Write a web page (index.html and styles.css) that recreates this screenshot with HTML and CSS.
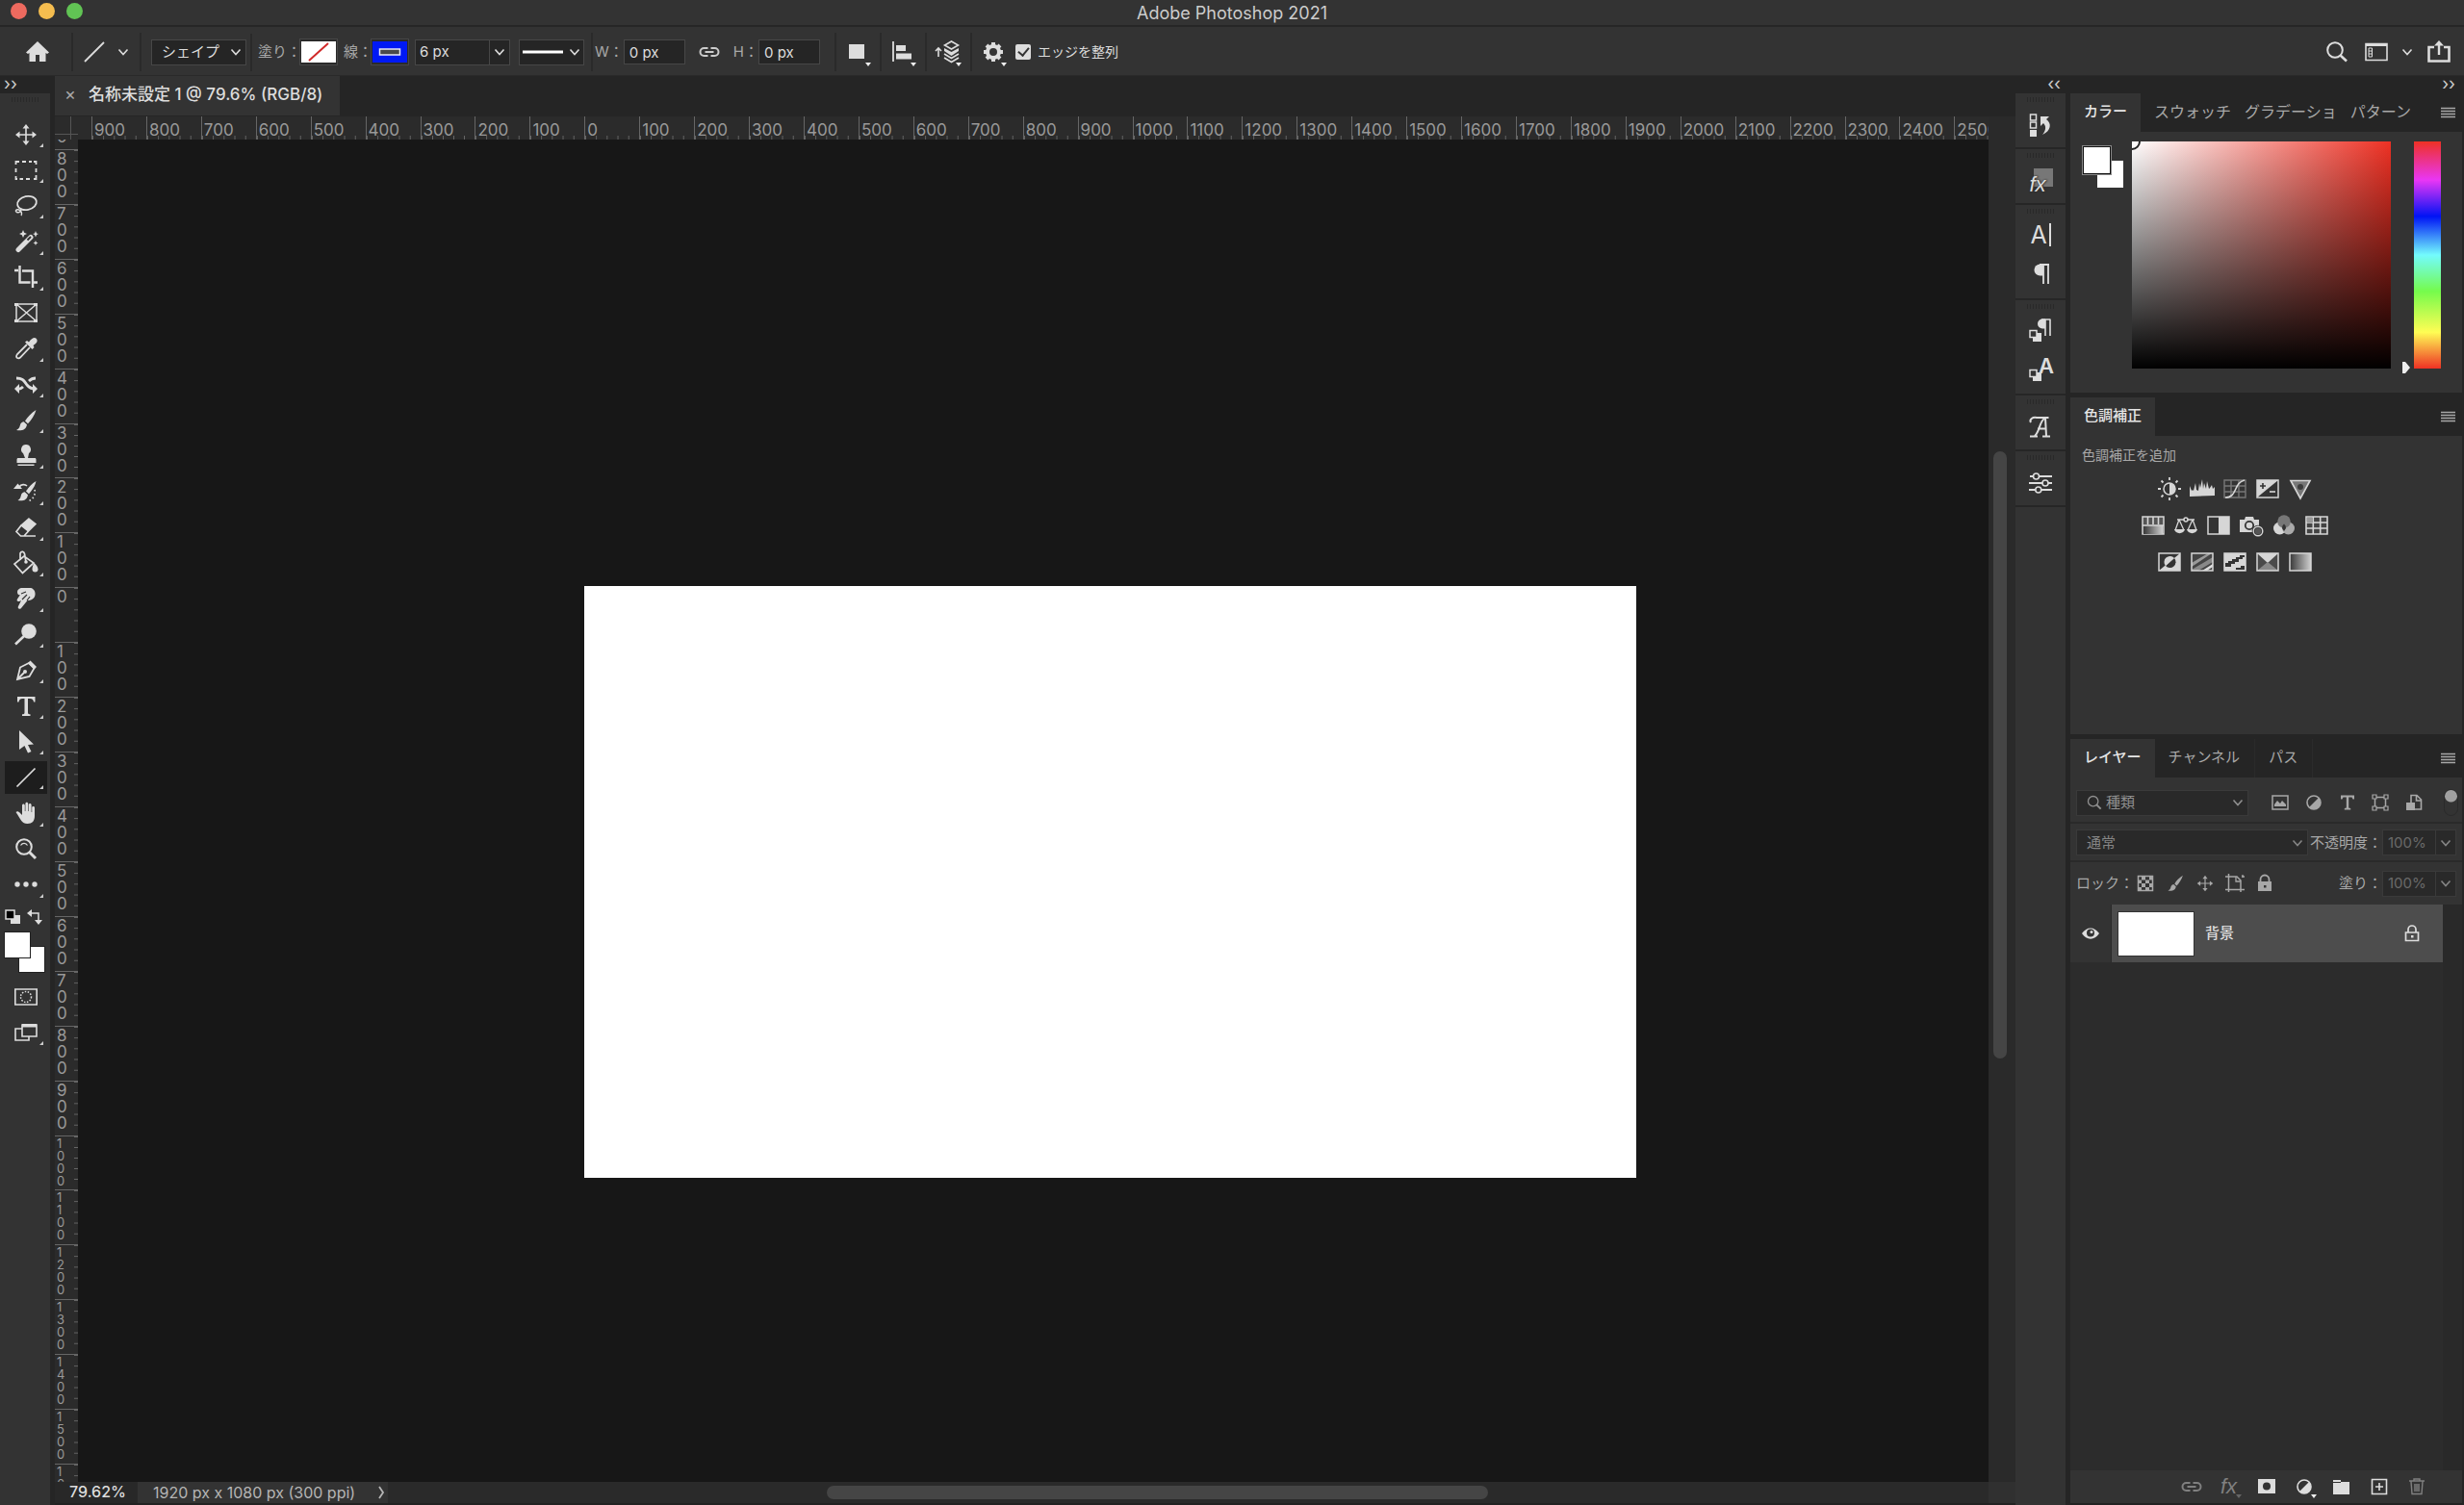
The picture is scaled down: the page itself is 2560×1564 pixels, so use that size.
FILE: index.html
```html
<!DOCTYPE html>
<html lang="ja">
<head>
<meta charset="utf-8">
<title>Adobe Photoshop 2021</title>
<link rel="stylesheet" href="styles.css">
</head>
<body>
<svg class="defs" aria-hidden="true">
  <defs>
    <symbol id="chevron" viewBox="0 0 12 12"><path d="M1.500 3.500l4.500 5 4.500-5" fill="none" stroke="currentColor" stroke-width="1.600"/></symbol>
    <symbol id="menu" viewBox="0 0 16 12"><path d="M0 1.500h15M0 4.500h15M0 7.500h15M0 10.500h15" stroke="currentColor" stroke-width="1.300"/></symbol>
    <symbol id="link" viewBox="0 0 24 24"><path d="M10.500 8H6.500a4 4 0 0 0 0 8h4M13.500 8h4a4 4 0 0 1 0 8h-4M7.500 12h9" fill="none" stroke="currentColor" stroke-width="2"/></symbol>
    <symbol id="half" viewBox="0 0 24 24"><circle cx="12" cy="12" r="7" fill="none" stroke="currentColor" stroke-width="1.600"/><path d="M17 7A7 7 0 0 1 7 17z" fill="currentColor"/></symbol>
    <symbol id="move" viewBox="0 0 24 24"><path d="M12 3v18M3 12h18" stroke="currentColor" stroke-width="1.600"/><path d="M12 1l3.500 4.500h-7zM12 23l3.500-4.500h-7zM1 12l4.500-3.500v7zM23 12l-4.500-3.500v7z" fill="currentColor"/></symbol>
    <symbol id="brush" viewBox="0 0 24 24"><path d="M22.500 1c-5 3-9 7.500-11.500 11.500l3 2.700C17.500 11.500 21 6.500 22.500 1zM9.700 13.200c-3.200.3-3.500 3-4.200 5-.6 1.800-2 3-3.500 3.800 5 .8 10 .2 11-5.800z" fill="currentColor"/></symbol>
    <symbol id="magnifier" viewBox="0 0 24 24"><circle cx="10" cy="10" r="7.800" fill="none" stroke="currentColor" stroke-width="2"/><path d="M15.500 15.500l6.500 6.500" stroke="currentColor" stroke-width="3"/></symbol>
    <symbol id="pilcrow" viewBox="0 0 24 24"><path d="M20 2v20M15 2v20M11 2h10" stroke="currentColor" stroke-width="1.800" fill="none"/><path d="M15 1.500v12h-3.500a6 6 0 0 1 0-12z" fill="currentColor"/></symbol>
    <linearGradient id="fade"><stop offset="0" stop-color="#383838"/><stop offset="1" stop-color="#d0d0d0"/></linearGradient>
  </defs>
</svg>

<div class="app">
  <header class="titlebar">
    <div class="lights"><button class="light red" aria-label="閉じる"></button><button class="light yellow" aria-label="しまう"></button><button class="light green" aria-label="拡大"></button></div>
    <h1 class="app-name">Adobe Photoshop 2021</h1>
  </header>

  <div class="options">
    <button class="home" aria-label="ホーム"><svg class="icon" viewBox="0 0 24 24"><path d="M12 1L0 12.500l2 1.500 1.500-1V22H10v-7h4v7h6.500v-9l1.500 1 2-1.500z" fill="currentColor"/></svg></button>
    <button class="current-tool" aria-label="ラインツール"><svg class="icon" viewBox="0 0 24 24"><path d="M2 22L22 2" stroke="currentColor" stroke-width="1.800"/></svg><svg class="chev"><use href="#chevron"/></svg></button>
    <div class="mode-group"><label class="select mode"><select aria-label="ツールモード"><option>シェイプ</option></select><svg class="chev"><use href="#chevron"/></svg></label></div>
    <div class="group">
      <span class="lbl">塗り：</span>
      <button class="swatch none" aria-label="塗り"><svg viewBox="0 0 36 22"><path d="M0 0h36v22H0z" fill="#fff"/><path d="M8 20L28 2" stroke="#d02a2a" stroke-width="2"/></svg></button>
      <span class="lbl">線：</span>
      <button class="swatch" aria-label="線"><svg viewBox="0 0 36 22"><path d="M0 0h36v22H0z" fill="#0019f5"/><path d="M7.500 8h21v6h-21z" fill="#4a4a4a" stroke="#e8e8f5" stroke-width="1.500"/></svg></button>
      <div class="combo stroke-width"><input value="6 px" aria-label="線の幅"><button aria-label="線の幅の一覧"><svg class="chev"><use href="#chevron"/></svg></button></div>
      <button class="line-type" aria-label="線の種類"><svg class="stroke-sample" viewBox="0 0 42 4"><path d="M0 2h42" stroke="#fff" stroke-width="3"/></svg><svg class="chev"><use href="#chevron"/></svg></button>
    </div>
    <div class="group size">
      <label class="lbl" for="w">W：</label><input class="field" id="w" value="0 px">
      <button class="chain" aria-label="縦横比を固定"><svg class="icon"><use href="#link"/></svg></button>
      <label class="lbl" for="h">H：</label><input class="field" id="h" value="0 px">
    </div>
    <button class="opt path" aria-label="パスの操作"><svg class="icon" viewBox="0 0 24 24"><path d="M3 4h16v15H3z" fill="currentColor"/></svg></button>
    <button class="opt" aria-label="パスの整列"><svg class="icon" viewBox="0 0 24 24"><path d="M2 1v21" stroke="currentColor" stroke-width="1.800"/><path d="M5 5h10v6H5zM5 13.500h16v6H5z" fill="currentColor"/></svg></button>
    <button class="opt" aria-label="パスの配置"><svg class="icon" viewBox="0 0 24 24"><path d="M2 17V8M-1 11l3-3 3 3" fill="none" stroke="currentColor" stroke-width="1.600"/><path d="M15.500 1l7 4-7 4-7-4z" fill="none" stroke="currentColor" stroke-width="1.600"/><path d="M8 8l7.500 4L23 8v3l-7.500 5L8 11z" fill="currentColor"/><path d="M8 14l7.500 4.500L23 14M8 18l7.500 4.500L23 18" fill="none" stroke="currentColor" stroke-width="1.600"/></svg></button>
    <button class="opt gear" aria-label="その他のオプション"><svg class="icon" viewBox="0 0 24 24"><circle cx="12" cy="12" r="6" fill="none" stroke="currentColor" stroke-width="4"/><path d="M12 2v3M12 19v3M2 12h3M19 12h3M5 5l2 2M17 17l2 2M5 19l2-2M17 7l2-2" stroke="currentColor" stroke-width="4"/></svg></button>
    <label class="check"><input type="checkbox" checked>エッジを整列</label>
    <div class="right-tools">
      <button aria-label="検索"><svg class="icon" viewBox="0 0 24 24"><circle cx="10" cy="10" r="7.800" fill="none" stroke="currentColor" stroke-width="2"/><path d="M15.500 15.500l6.500 6" stroke="currentColor" stroke-width="2.600"/></svg></button>
      <button class="workspace" aria-label="ワークスペース"><svg class="icon" viewBox="0 0 24 24"><path d="M1 3.500h22v17H1z" fill="none" stroke="currentColor" stroke-width="1.600"/><path d="M1 3h22v3H1z" fill="currentColor"/><path d="M4 8h3.500v9H4zM4 11h3.500M4 14h3.500" fill="none" stroke="currentColor"/></svg><svg class="chev"><use href="#chevron"/></svg></button>
      <button aria-label="共有"><svg class="icon" viewBox="0 0 24 24"><path d="M7 7H1.500v14.500h21V7H17" fill="none" stroke="currentColor" stroke-width="2.600"/><path d="M12 3v12" stroke="currentColor" stroke-width="2.400"/><path d="M12 0l5 5.500H7z" fill="currentColor"/></svg></button>
    </div>
  </div>

  <main class="workarea">
    <aside class="toolbar">
      <div class="strip left">››</div>
      <div class="grip wide"></div>
      <nav class="tools">
        <button class="tool" aria-label="移動"><svg class="icon"><use href="#move"/></svg></button>
        <button class="tool" aria-label="長方形選択"><svg class="icon" viewBox="0 0 24 24"><path d="M1.500 6V3H5M8 3h4M15 3h3M20 3h2.500v3M22.500 10v4M22.500 17v4H20M16 21h-4M9 21H5.500M3 21H1.500v-3M1.500 14v-4" fill="none" stroke="currentColor" stroke-width="1.800"/></svg></button>
        <button class="tool" aria-label="なげなわ"><svg class="icon" viewBox="0 0 24 24"><ellipse cx="13" cy="9" rx="10" ry="7" transform="rotate(-12 13 9)" fill="none" stroke="currentColor" stroke-width="1.800"/><path d="M7 22c1.500-2 0-5-2.500-6-3-.8-4 1.500-2 2.500 2.500 1 5-1 4.500-4" fill="none" stroke="currentColor" stroke-width="1.500"/></svg></button>
        <button class="tool" aria-label="自動選択"><svg class="icon" viewBox="0 0 24 24"><path d="M4 20.500L17 7.500" stroke="currentColor" stroke-width="5" stroke-linecap="round"/><path d="M13.500 10.500l3.500-3.500" stroke="#333" stroke-width="2"/><path d="M9 0l1.200 2.800L13 4l-2.800 1.200L9 8 7.800 5.200 5 4l2.800-1.200zM22 1l1 2.500 2 .5-2 1-1 2.500-1-2.500-2-1 2-.5zM22 11l.8 1.700 1.700.8-1.700.8L22 16l-.8-1.700-1.700-.8 1.700-.8z" fill="currentColor"/></svg></button>
        <button class="tool" aria-label="切り抜き"><svg class="icon" viewBox="0 0 24 24"><path d="M5.500 0v17.500h11M18 17.500h6M0 5h4M8 5.500h11V23" fill="none" stroke="currentColor" stroke-width="2.400"/></svg></button>
        <button class="tool plain" aria-label="フレーム"><svg class="icon" viewBox="0 0 24 24"><path d="M2 3h21v18H2zM2 3l21 18M23 3L2 21" fill="none" stroke="currentColor" stroke-width="1.500"/><path d="M0 2h4v3H0zM20 2h4v3h-4zM0 19h4v3H0zM20 19h4v3h-4z" fill="currentColor"/></svg></button>
        <button class="tool" aria-label="スポイト"><svg class="icon" viewBox="0 0 24 24"><path d="M13 8L3 18c-1.500 2-1 3.500 0 4s2 .5 3-.5L16 11" fill="none" stroke="currentColor" stroke-width="1.800"/><path d="M11 5.500l2-1.500 2 1.500C17 2.500 19 1 21 1c2 .5 3 2 2.500 4-.5 1.500-2 2.500-4 4l1 2-2 2z" fill="currentColor"/></svg></button>
        <button class="tool" aria-label="コンテンツに応じた移動"><svg class="icon" viewBox="0 0 24 24"><path d="M2 5c7 0 8 3 11 7 2.500 3 4 4 8 4M22 5c-4 0-5 1-7 3M9 14c-2 2-3 2.500-6 2.500" fill="none" stroke="currentColor" stroke-width="2.800"/><path d="M24 16l-5-5v10zM0 16l5-5v10z" fill="currentColor"/></svg></button>
        <button class="tool" aria-label="ブラシ"><svg class="icon"><use href="#brush"/></svg></button>
        <button class="tool" aria-label="コピースタンプ"><svg class="icon" viewBox="0 0 24 24"><path d="M12 0a5 5 0 0 1 3 9l-1 5h7c1 0 1.500.7 1.500 1.500V19h-20v-3.500c0-.8.500-1.500 1.500-1.500h7L9 9a5 5 0 0 1 3-9zM3.500 20.500h17v1.500h-17z" fill="currentColor"/></svg></button>
        <button class="tool" aria-label="ヒストリーブラシ"><svg class="icon" viewBox="0 0 24 24"><path d="M22.500 1c-4.500 2.500-8 6.500-10.500 10.500l3 2.700C18 10.500 21.500 6.500 22.500 1zM10.700 12.200c-3.200.3-3.700 3-4.200 5-.6 1.800-1.500 3-3 3.800 5 .8 9.500.2 10.500-5.800zM-1 9l4.500-5.500L8 9z" fill="currentColor"/><path d="M5 7c2-3 6-3 8-1" fill="none" stroke="currentColor" stroke-width="1.700"/><path d="M21 10c1 5-1 9-6 11.500" fill="none" stroke="currentColor" stroke-width="1.700" stroke-dasharray="1.500 2.500"/></svg></button>
        <button class="tool" aria-label="消しゴム"><svg class="icon" viewBox="0 0 24 24"><path d="M15 3l7 5.500-7.500 7.500-7.500-6z" fill="currentColor" stroke="currentColor" stroke-width="1.500"/><path d="M7 10l-5 6.500 4.500 4.500H10l4.500-5M8 21h14" fill="none" stroke="currentColor" stroke-width="1.700"/></svg></button>
        <button class="tool" aria-label="塗りつぶし"><svg class="icon" viewBox="0 0 24 24"><path d="M10 5L0 13l8.500 9.500L20 12zM6 9V2c1.500-3 4-1.500 4.500.5L12 11" fill="none" stroke="currentColor" stroke-width="1.700"/><circle cx="12" cy="11" r="1.800" fill="currentColor"/><path d="M20.500 12c2 2 4 4 4 6.500a3 3 0 0 1-6 0c0-2.500 1-4.500 2-6.500z" fill="currentColor"/></svg></button>
        <button class="tool" aria-label="指先"><svg class="icon" viewBox="0 0 24 24"><path d="M3 5c0-2 2-3.500 4-4h10c3 .5 5 4 4.500 7-.5 4-4 6-8 6L7 22c-2 2-4 0-3-2l3-6-2 1c-2 .5-3-1-2-2.500L6 8c-2 1-3-1-3-3z" fill="currentColor"/><path d="M7 7l5-2M8 13l5-5M13 14l3-4" stroke="#333" stroke-width="1.200"/></svg></button>
        <button class="tool" aria-label="覆い焼き"><svg class="icon" viewBox="0 0 24 24"><circle cx="15" cy="9" r="7.800" fill="currentColor"/><path d="M10 14l-9 8.500" stroke="currentColor" stroke-width="2.600"/></svg></button>
        <button class="tool" aria-label="ペン"><svg class="icon" viewBox="0 0 24 24"><path d="M15 4L6 8.500 3 21l12.500-3 5-8.500zM3 21l7-7" fill="none" stroke="currentColor" stroke-width="1.800"/><circle cx="11" cy="13" r="2" fill="currentColor"/><path d="M16.500 1.500l6.500 6.500-2.500 2.500-6.500-6.500z" fill="currentColor"/></svg></button>
        <button class="tool" aria-label="横書き文字"><svg class="icon" viewBox="0 0 24 24"><path d="M3 2h18.500v5.500H20c-.3-2-1.200-3.500-4-3.500h-2v14.500c0 1.500 1 1.800 2.500 1.800V22h-8.500v-1.700c1.500 0 2.500-.3 2.500-1.800V4h-2C5.700 4 5 5.500 4.500 7.500H3z" fill="currentColor"/></svg></button>
        <button class="tool" aria-label="パス選択"><svg class="icon" viewBox="0 0 24 24"><path d="M5 0l15 14.500-6 .5 3.500 7-3.500 1.500-3.500-7.500L5 20z" fill="currentColor"/></svg></button>
        <button class="tool active" aria-label="ライン"><svg class="icon" viewBox="0 0 24 24"><path d="M2.500 21.500l19-19" stroke="currentColor" stroke-width="1.700"/></svg></button>
        <button class="tool" aria-label="手のひら"><svg class="icon" viewBox="0 0 24 24"><path d="M1.500 11c1.500-1.500 3-.5 4 .5L8 14V4c0-2 2.700-2 2.800 0v6h.6V2.200c0-2 2.700-2 2.800 0V10h.6V3.500c0-2 2.700-2 2.800 0V11h.6V6.500c0-2 2.700-1.800 2.800 0V15c0 5-2.500 8-7.500 8-6 0-6.500-4-12-12z" fill="currentColor"/></svg></button>
        <button class="tool plain" aria-label="ズーム"><svg class="icon" viewBox="0 0 24 24"><use href="#magnifier"/><path d="M6.500 8.500c2-3 5.500-2.500 7 0" fill="none" stroke="currentColor" stroke-width="1.200"/></svg></button>
        <button class="tool" aria-label="ツールバーを編集"><svg class="icon" viewBox="0 0 24 24"><circle cx="3" cy="12" r="2.700" fill="currentColor"/><circle cx="12" cy="12" r="2.700" fill="currentColor"/><circle cx="21" cy="12" r="2.700" fill="currentColor"/></svg></button>
      </nav>
      <div class="mini"><button aria-label="初期設定の色"><svg class="small" viewBox="0 0 16 16"><path d="M6 6h10v9H6z" fill="#ddd"/><path d="M1 1h9v9H1z" fill="#000" stroke="#ddd" stroke-width="1.500"/></svg></button><button aria-label="色を入れ替え"><svg class="small" viewBox="0 0 16 16"><path d="M4 4h8v9" fill="none" stroke="currentColor" stroke-width="1.500"/><path d="M0 4l5-4v8zM12 16l-4-5h8z" fill="currentColor"/></svg></button></div>
      <div class="colors"><button class="chip back" aria-label="背景色"></button><button class="chip fore" aria-label="描画色"></button></div>
      <button class="tool plain bottom" aria-label="クイックマスク"><svg class="icon" viewBox="0 0 24 24"><path d="M.8 4h22.400v16H.8z" fill="none" stroke="currentColor" stroke-width="1.600"/><circle cx="12" cy="12" r="5.500" fill="none" stroke="currentColor" stroke-width="1.500" stroke-dasharray="1.500 1.500"/></svg></button>
      <button class="tool bottom" aria-label="スクリーンモード"><svg class="icon" viewBox="0 0 24 24"><path d="M8 8H1v12h14v-4M8 4h15v12H8z" fill="none" stroke="currentColor" stroke-width="1.600"/><path d="M8 3h15v3.500H8z" fill="currentColor"/></svg></button>
    </aside>

    <section class="document">
      <div class="doc-tabs"><div class="doc-tab"><button class="close" aria-label="閉じる">×</button><span>名称未設定 1 @ 79.6% (RGB/8)</span></div></div>
      <div class="corner"></div>
      <div class="ruler-x"><div class="ticks-x">
        <span>900</span><span>800</span><span>700</span><span>600</span><span>500</span><span>400</span><span>300</span><span>200</span><span>100</span><span>0</span><span>100</span><span>200</span><span>300</span><span>400</span><span>500</span><span>600</span><span>700</span><span>800</span><span>900</span><span>1000</span><span>1100</span><span>1200</span><span>1300</span><span>1400</span><span>1500</span><span>1600</span><span>1700</span><span>1800</span><span>1900</span><span>2000</span><span>2100</span><span>2200</span><span>2300</span><span>2400</span><span>2500</span>
      </div></div>
      <div class="ruler-y"><div class="ticks-y">
        <span>900</span><span>800</span><span>700</span><span>600</span><span>500</span><span>400</span><span>300</span><span>200</span><span>100</span><span>0</span><span>100</span><span>200</span><span>300</span><span>400</span><span>500</span><span>600</span><span>700</span><span>800</span><span>900</span><span class="long">1000</span><span class="long">1100</span><span class="long">1200</span><span class="long">1300</span><span class="long">1400</span><span class="long">1500</span><span class="long">1600</span>
      </div></div>
      <div class="stage"><div class="artboard"></div></div>
      <div class="scroll-y"><div class="thumb-y"></div></div>
      <footer class="status">
        <span class="zoom">79.62%</span>
        <button class="doc-info"><span>1920 px x 1080 px (300 ppi)</span><svg class="next" viewBox="0 0 8 14"><path d="M2 1l4 6-4 6" fill="none" stroke="currentColor" stroke-width="1.800"/></svg></button>
        <div class="scroll-x"><div class="thumb-x"></div></div>
        <div class="status-end"></div>
      </footer>
    </section>

    <aside class="dock">
      <div class="strip right">‹‹</div>
      <div class="dock-group"><div class="grip"></div><button aria-label="ヒストリー"><svg class="icon" viewBox="0 0 24 24"><path d="M1.500 1h6v6h-6zM1.500 9h6v6h-6z" fill="none" stroke="currentColor" stroke-width="1.500"/><path d="M1 17h7v7H1z" fill="currentColor"/><path d="M12 3h9l-3 3c6 4 5 12-4 16 4-5 4-9 1-12l-3 3z" fill="currentColor"/></svg></button></div>
      <div class="dock-group"><div class="grip"></div><button class="fx-button" aria-label="スタイル"><span class="fx-plate"></span><i class="fx">fx</i></button></div>
      <div class="dock-group double"><div class="grip"></div><button class="letter caret" aria-label="文字">A</button><button aria-label="段落"><svg class="icon"><use href="#pilcrow"/></svg></button></div>
      <div class="dock-group double"><div class="grip"></div><button aria-label="段落スタイル"><svg class="icon" viewBox="0 0 24 24"><path d="M22 1v17M17 1v17M13 1h9.500" stroke="currentColor" stroke-width="1.600"/><path d="M17 .5v10h-3a5 5 0 0 1 0-10z" fill="currentColor"/><path d="M4 15h9v9H4z" fill="currentColor"/><path d="M1 12.500h7v7H1z" fill="#333" stroke="currentColor" stroke-width="1.500"/></svg></button><button class="char-style" aria-label="文字スタイル"><svg class="icon" viewBox="0 0 24 24"><path d="M4 15h9v9H4z" fill="currentColor"/><path d="M1 12.500h7v7H1z" fill="#333" stroke="currentColor" stroke-width="1.500"/></svg><b>A</b></button></div>
      <div class="dock-group"><div class="grip"></div><button class="glyph" aria-label="字形"><svg class="icon" viewBox="0 0 24 24"><path d="M2 7c-2-3 2-6 6-5h12.500M17 2l1 19M16 3C11 6 11 17 6 21M9 13.500h9M1 21.500h8M14 21.500h8" fill="none" stroke="currentColor" stroke-width="2"/></svg></button></div>
      <div class="dock-group"><div class="grip"></div><button aria-label="属性"><svg class="icon" viewBox="0 0 24 24"><path d="M1 5h3.500M10.500 5H24M0 12h14M20 12h4M0 19h6.500M13 19h11" stroke="currentColor" stroke-width="1.800"/><circle cx="7.500" cy="5" r="3" fill="none" stroke="currentColor" stroke-width="1.600"/><circle cx="17" cy="12" r="3" fill="none" stroke="currentColor" stroke-width="1.600"/><circle cx="9.800" cy="19" r="3" fill="none" stroke="currentColor" stroke-width="1.600"/></svg></button></div>
      <div class="dock-rest"></div>
    </aside>

    <aside class="panels">
      <div class="strip end">››</div>
      <section class="panel color-panel">
        <div class="tabs"><button class="tab on">カラー</button><button class="tab tight">スウォッチ</button><button class="tab tight">グラデーショ</button><button class="tab tight">パターン</button><button class="menu" aria-label="メニュー"><svg><use href="#menu"/></svg></button></div>
        <div class="picker">
          <div class="pair"><button class="pair-back" aria-label="背景色"></button><button class="pair-fore" aria-label="描画色"></button></div>
          <div class="field2d"><div class="marker"></div></div>
          <svg class="hue-arrow" viewBox="0 0 10 12"><path d="M1 0h3l5 6-5 6H1z" fill="#eee"/></svg>
          <div class="hue"></div>
        </div>
      </section>
      <section class="panel adjust-panel">
        <div class="tabs"><button class="tab on">色調補正</button><button class="menu" aria-label="メニュー"><svg><use href="#menu"/></svg></button></div>
        <p class="hint">色調補正を追加</p>
        <div class="adjusts">
          <div class="adj-row">
            <button aria-label="明るさ・コントラスト"><svg class="icon" viewBox="0 0 24 24"><circle cx="12" cy="12" r="6" fill="none" stroke="currentColor" stroke-width="1.500"/><path d="M12 6a6 6 0 0 1 0 12z" fill="currentColor"/><path d="M12 0v3M12 21v3M0 12h3M21 12h3M3.500 3.500l2 2M18.500 18.500l2 2M3.500 20.500l2-2M18.500 5.500l2-2" stroke="currentColor" stroke-width="1.800"/></svg></button>
            <button aria-label="レベル補正"><svg class="icon" viewBox="0 0 24 24"><path d="M-1 20V9l2 5 1-1 1 1 2-8 1 7 2 1 1-8 1 5 2-9 1 10 1-6 2 6 1-8 2 8 1-1 2-3 1 4 1-1 1-1v9z" fill="currentColor"/></svg></button>
            <button aria-label="トーンカーブ"><svg class="icon" viewBox="0 0 24 24"><path d="M1 3h22v18H1zM8 3v18M16 3v18M1 9h22M1 15h22" fill="none" stroke="#777" stroke-width="1.400"/><path d="M2 21c13 0 8-15 20-18" fill="none" stroke="currentColor" stroke-width="1.600"/></svg></button>
            <button aria-label="露光量"><svg class="icon" viewBox="0 0 24 24"><path d="M1 3h22v18H1z" fill="none" stroke="currentColor" stroke-width="1.500"/><path d="M1 3h22L1 21z" fill="currentColor"/><path d="M4 9h6M7 6v6" stroke="#333" stroke-width="1.600"/><path d="M14 15h6" stroke="currentColor" stroke-width="1.600"/></svg></button>
            <button aria-label="自然な彩度"><svg class="icon" viewBox="0 0 24 24"><path d="M2 3.500h20L12 22z" fill="#777" stroke="currentColor" stroke-width="1.700"/><circle cx="12" cy="10" r="3" fill="#3c3c3c"/></svg></button>
          </div>
          <div class="adj-row">
            <button aria-label="色相・彩度"><svg class="icon" viewBox="0 0 24 24"><path d="M1 3h22v18H1z" fill="#555" stroke="currentColor" stroke-width="1.500"/><path d="M2 12h20v9H2z" fill="url(#fade)"/><path d="M1 12h22M6.500 3v8M12 3v8M17.500 3v8" stroke="currentColor" stroke-width="1.600"/></svg></button>
            <button aria-label="カラーバランス"><svg class="icon" viewBox="0 0 24 24"><path d="M3 6h18M5 6L1 17M5 6l5 11M19 6l-5 11M19 6l4 11" fill="none" stroke="currentColor" stroke-width="1.300"/><path d="M0 16h11c-1 5.500-10 5.500-11 0zM13 16h11c-1 5.500-10 5.500-11 0z" fill="currentColor"/><circle cx="12" cy="6" r="2" fill="#333" stroke="currentColor" stroke-width="1.500"/></svg></button>
            <button aria-label="白黒"><svg class="icon" viewBox="0 0 24 24"><path d="M1 3h22v18H1z" fill="none" stroke="currentColor" stroke-width="1.500"/><path d="M12 3h11v18H12z" fill="currentColor"/></svg></button>
            <button aria-label="レンズフィルター"><svg class="icon" viewBox="0 0 24 24"><path d="M0 6h5l1-3h8l1 3h5v13H0z" fill="currentColor"/><circle cx="10" cy="12" r="4.200" fill="none" stroke="#333" stroke-width="1.800"/><circle cx="19" cy="18" r="4.800" fill="#555" stroke="#333" stroke-width="3"/><circle cx="19" cy="18" r="4.800" fill="none" stroke="currentColor" stroke-width="1.400"/></svg></button>
            <button aria-label="チャンネルミキサー"><svg class="icon" viewBox="0 0 24 24"><circle cx="7.500" cy="15" r="6.500" fill="#d6d6d6"/><circle cx="16.500" cy="15" r="6.500" fill="#aaa"/><circle cx="12" cy="8" r="6.800" fill="#777"/><path d="M12 10.500a5 5 0 0 1 2 4.500l-2 3-2-3a5 5 0 0 1 2-4.500z" fill="#333"/></svg></button>
            <button aria-label="カラールックアップ"><svg class="icon" viewBox="0 0 24 24"><path d="M1 3h22v18H1zM8.300 3v18M15.700 3v18M1 9h22M1 15h22" fill="#444" stroke="currentColor" stroke-width="1.600"/><path d="M2 4h6v5H2z" fill="#999"/></svg></button>
          </div>
          <div class="adj-row">
            <button aria-label="階調の反転"><svg class="icon" viewBox="0 0 24 24"><path d="M1 3h22v18H1z" fill="none" stroke="currentColor" stroke-width="1.500"/><path d="M23 3v18H1z" fill="currentColor"/><path d="M17 8a5.500 5.500 0 0 1-9 8z" fill="#333"/><path d="M17 8a5.500 5.500 0 0 0-9 8z" fill="currentColor"/></svg></button>
            <button aria-label="ポスタリゼーション"><svg class="icon" viewBox="0 0 24 24"><path d="M1 3h22v18H1z" fill="#444"/><path d="M1 13L18 3h4L1 17z" fill="#999"/><path d="M1 20L23 7v5L8 21H1z" fill="#888"/><path d="M12 21l11-7v3l-6 4z" fill="#ddd"/><path d="M1 3h22v18H1z" fill="none" stroke="currentColor" stroke-width="1.500"/></svg></button>
            <button aria-label="2階調化"><svg class="icon" viewBox="0 0 24 24"><path d="M1 3h22v18H1z" fill="currentColor" stroke="currentColor" stroke-width="1.500"/><path d="M2 13h3v-2h4V9h4V7h4V5h5v2h-2v2h-4v3h-4v2H8v3H2zM13 20v-2h5v-2h4v4z" fill="#333"/></svg></button>
            <button aria-label="特定色域の選択"><svg class="icon" viewBox="0 0 24 24"><path d="M1 3h22v18H1z" fill="#4a4a4a"/><path d="M1 3l11 10L23 3z" fill="currentColor"/><path d="M1 21l11-9 11 9z" fill="#888"/><path d="M1 3h22v18H1z" fill="none" stroke="currentColor" stroke-width="1.500"/></svg></button>
            <button aria-label="グラデーションマップ"><svg class="icon" viewBox="0 0 24 24"><path d="M1 3h22v18H1z" fill="url(#fade)" stroke="currentColor" stroke-width="1.500"/></svg></button>
          </div>
        </div>
      </section>
      <section class="panel layers-panel">
        <div class="tabs"><button class="tab on">レイヤー</button><button class="tab">チャンネル</button><button class="tab">パス</button><button class="menu" aria-label="メニュー"><svg><use href="#menu"/></svg></button></div>
        <div class="filter-row">
          <label class="select dim kind"><svg class="small"><use href="#magnifier"/></svg><select aria-label="レイヤーの種類"><option>種類</option></select><svg class="chev"><use href="#chevron"/></svg></label>
          <div class="filters">
            <button aria-label="ピクセル"><svg class="icon" viewBox="0 0 24 24"><path d="M4 5h16v14H4z" fill="none" stroke="currentColor" stroke-width="1.500"/><path d="M6 16v-2l3-4 3 3 2-3 4 4v2z" fill="currentColor"/></svg></button>
            <button aria-label="調整"><svg class="icon"><use href="#half"/></svg></button>
            <button aria-label="テキスト"><svg class="icon" viewBox="0 0 24 24"><path d="M5 4.500h14v4h-1.500l-1-2H13.200v11l2 .5v1.500H8.800V18l2-.5v-11H7.500l-1 2H5z" fill="currentColor"/></svg></button>
            <button aria-label="シェイプ"><svg class="icon" viewBox="0 0 24 24"><path d="M6.500 6.500h11v11h-11z" fill="none" stroke="currentColor" stroke-width="1.500"/><path d="M4 4h4v4H4zM16 4h4v4h-4zM4 16h4v4H4zM16 16h4v4h-4z" fill="#333" stroke="currentColor" stroke-width="1.200"/></svg></button>
            <button aria-label="スマートオブジェクト"><svg class="icon" viewBox="0 0 24 24"><path d="M9 12V4.500h6l4.500 4.500v10H13M14.500 4.500V10H19" fill="none" stroke="currentColor" stroke-width="1.600"/><path d="M4 12h9v8H4z" fill="currentColor"/></svg></button>
          </div>
          <label class="toggle"><input type="checkbox" checked aria-label="フィルターの切り替え"></label>
        </div>
        <div class="blend-row">
          <label class="select dim blend"><select aria-label="描画モード"><option>通常</option></select><svg class="chev"><use href="#chevron"/></svg></label>
          <label class="lbl end" for="opacity">不透明度：</label>
          <div class="combo dim"><input id="opacity" value="100%"><button aria-label="不透明度の調整"><svg class="chev"><use href="#chevron"/></svg></button></div>
        </div>
        <div class="lock-row">
          <span class="lbl lock-label">ロック：</span>
          <button aria-label="透明ピクセルをロック"><svg class="icon" viewBox="0 0 24 24"><path d="M4.500 4.500h15v15h-15z" fill="none" stroke="currentColor" stroke-width="1.500"/><path d="M8 5h4v3.500H8zM16 5h3v3.500h-3zM5 8.500h3V12H5zM12 8.500h4V12h-4zM8 12h4v4H8zM16 12h3v4h-3zM5 16h3v3H5zM12 16h4v3h-4z" fill="currentColor"/></svg></button>
          <button aria-label="画像ピクセルをロック"><svg class="icon pad"><use href="#brush"/></svg></button>
          <button aria-label="位置をロック"><svg class="icon pad"><use href="#move"/></svg></button>
          <button aria-label="アートボードの自動ネストを防止"><svg class="icon" viewBox="0 0 24 24"><path d="M5.500 2v19M18 21V9l-4-4H2M2 18.500h20" fill="none" stroke="currentColor" stroke-width="1.500"/><path d="M13 5v5h5M20 3v3M22 5h-3" fill="none" stroke="currentColor" stroke-width="1.300"/></svg></button>
          <button aria-label="すべてをロック"><svg class="icon" viewBox="0 0 24 24"><path d="M7.500 11V8a4.500 4.500 0 0 1 9 0v3" fill="none" stroke="currentColor" stroke-width="1.800"/><path d="M5 10h14v10H5z" fill="currentColor"/><path d="M11 14h2.500v2.500H11z" fill="#333"/></svg></button>
          <label class="lbl end" for="fill">塗り：</label>
          <div class="combo dim"><input id="fill" value="100%"><button aria-label="塗りの調整"><svg class="chev"><use href="#chevron"/></svg></button></div>
        </div>
        <div class="layer-list">
          <div class="layer">
            <button class="eye" aria-label="表示"><svg class="icon" viewBox="0 0 24 24"><path d="M3 12c5-7.500 13-7.500 18 0-5 7.500-13 7.500-18 0z" fill="currentColor"/><circle cx="12" cy="11.500" r="4" fill="#333"/><circle cx="13" cy="10.500" r="1.500" fill="currentColor"/></svg></button>
            <div class="layer-body"><span class="thumb"></span><span class="layer-name">背景</span><svg class="icon lock" viewBox="0 0 24 24"><path d="M8 11V8a4 4 0 0 1 8 0v3M5.500 11h13v8.500h-13z" fill="none" stroke="currentColor" stroke-width="1.700"/><path d="M11 14h2.500v2.500H11z" fill="currentColor"/></svg></div>
          </div>
          <div class="layer-space"></div>
        </div>
        <footer class="layer-actions">
          <button class="off" aria-label="リンク"><svg class="icon"><use href="#link"/></svg></button>
          <button class="off drop" aria-label="レイヤースタイル"><i class="fx">fx</i></button>
          <button aria-label="マスク"><svg class="icon" viewBox="0 0 24 24"><path d="M3 4h18v15H3z" fill="currentColor"/><circle cx="12" cy="11.500" r="4" fill="#333"/></svg></button>
          <button class="drop" aria-label="調整レイヤー"><svg class="icon"><use href="#half"/></svg></button>
          <button aria-label="グループ"><svg class="icon" viewBox="0 0 24 24"><path d="M3 5h8v2h9v13H3z" fill="currentColor"/><path d="M3 7.500h8" stroke="#333"/></svg></button>
          <button aria-label="新規レイヤー"><svg class="icon" viewBox="0 0 24 24"><path d="M4.500 4.500h15v15h-15zM12 8v8M8 12h8" fill="none" stroke="currentColor" stroke-width="1.600"/></svg></button>
          <button class="off" aria-label="削除"><svg class="icon" viewBox="0 0 24 24"><path d="M4 6h16M9 6V4h6v2M6 6.500l1 13h10l1-13M10 9v8M12 9v8M14 9v8" fill="none" stroke="currentColor" stroke-width="1.400"/></svg></button>
        </footer>
      </section>
    </aside>
  </main>
</div>
</body>
</html>
```
FILE: styles.css
```css
:root {
  --panel: #333333;
  --dark: #252525;
  --list: #2c2c2c;
  --line: #262626;
  --edge: #474747;
  --text: #dddddd;
  --muted: #a8a8a8;
  --faint: #858585;
}

* { box-sizing: border-box; }

body {
  margin: 0;
  background: var(--dark);
  color: var(--text);
  font: 15px/20px Inter, "Noto Sans CJK JP", sans-serif;
}

button, input, select {
  margin: 0;
  padding: 0;
  border: 0;
  border-radius: 0;
  background: none;
  color: inherit;
  font: inherit;
  appearance: none;
}

button { display: flex; align-items: center; justify-content: center; flex: none; }
svg { display: block; flex: none; overflow: visible; }
.defs { position: absolute; width: 0; height: 0; }
.icon { width: 24px; height: 24px; }
.small { width: 16px; height: 16px; }
.chev { width: 12px; height: 12px; }
.pad { padding: 3px; }

.app {
  display: grid;
  grid-template-rows: 28px 51px minmax(0, 1fr);
  height: 100vh;
  overflow: hidden;
}

/* title bar */
.titlebar {
  display: grid;
  grid-template-columns: 1fr auto 1fr;
  align-items: center;
  background: var(--panel);
  border-bottom: 2px solid var(--line);
}
.lights { display: flex; gap: 12px; padding: 0 0 3px 11px; }
.light { width: 17px; height: 17px; border-radius: 50%; }
.red { background: #ee6a5f; }
.yellow { background: #f5bd4f; }
.green { background: #61c454; }
.app-name { margin: 0; padding-top: 2px; font-size: 18px; font-weight: 400; color: #cccccc; }

/* options bar */
.options {
  display: flex;
  align-items: center;
  padding-top: 2px;
  background: var(--panel);
  border-bottom: 1px solid #2a2a2a;
}
.home { width: 76px; height: 40px; padding-left: 3px; border-right: 2px solid #2a2a2a; }
.current-tool { width: 71px; height: 40px; gap: 12px; padding-right: 2px; border-right: 2px solid #2a2a2a; }
.mode-group { padding: 6px 4px 6px 10px; border-right: 2px solid #2a2a2a; }
.group { display: flex; align-items: center; height: 40px; padding-left: 6px; border-right: 2px solid #2a2a2a; }
.lbl { color: var(--muted); white-space: nowrap; }
.select {
  display: flex;
  align-items: center;
  height: 27px;
  padding: 0 4px 0 10px;
  border: 1px solid var(--edge);
  background: #252525;
}
.select select { flex: 1; min-width: 0; }
.mode { width: 99px; }
.swatch { width: 40px; height: 28px; margin: 0 6px 0 -2px; border: 1px solid var(--edge); background: #2a2a2a; }
.swatch svg { width: 36px; height: 22px; }
.combo { display: flex; height: 27px; border: 1px solid var(--edge); background: #252525; }
.combo input { flex: 1; min-width: 0; padding-left: 4px; border-right: 1px solid var(--edge); }
.combo button { width: 20px; }
.stroke-width { width: 99px; }
.line-type { width: 68px; height: 27px; margin: 0 7px 0 9px; gap: 6px; border: 1px solid var(--edge); background: #252525; }
.stroke-sample { width: 42px; height: 4px; }
.field { width: 64px; height: 26px; padding-left: 5px; border: 1px solid var(--edge); background: #252525; }
.size { padding: 0 15px 0 2px; }
.chain { width: 50px; color: #cccccc; }
.opt { position: relative; width: 47px; height: 40px; border-right: 2px solid #2a2a2a; }
.gear { width: 45px; border: 0; }
.opt::after, .drop::after {
  content: "";
  position: absolute;
  right: 9px;
  bottom: 5px;
  border: 3px solid transparent;
  border-top: 4px solid #eeeeee;
  border-bottom: 0;
}
.check { display: flex; align-items: center; gap: 7px; font-size: 14px; }
.check input { width: 16px; height: 16px; border-radius: 2px; background: #dddddd; }
.check input:checked::after {
  content: "";
  display: block;
  width: 5px;
  height: 9px;
  margin: 1px 5px;
  border: solid #333333;
  border-width: 0 2px 2px 0;
  transform: rotate(40deg);
}
.right-tools { display: flex; gap: 17px; margin-left: auto; padding-right: 14px; }
.workspace { gap: 14px; margin-right: -2px; }

/* work area */
.workarea {
  display: grid;
  grid-template: minmax(0, 1fr) / 52px minmax(0, 1fr) 52px 407px;
  column-gap: 5px;
  min-height: 0;
  padding-right: 2px;
}
.document { margin-right: -5px; }
.strip { flex: none; height: 18px; color: #cccccc; font-size: 18px; line-height: 16px; }
.strip.left { padding-left: 4px; }
.strip.right { padding-right: 5px; text-align: right; }
.strip.end { padding-right: 7px; text-align: right; }

/* toolbar */
.toolbar { display: flex; flex-direction: column; background: linear-gradient(var(--dark) 18px, var(--panel) 18px); }
.grip {
  flex: none;
  width: 28px;
  height: 5px;
  margin: 4px auto 0;
  background: repeating-linear-gradient(90deg, #292929 0 1px, #333333 1px 3px);
}
.grip.wide { margin-bottom: 15px; }
.tools { display: grid; flex: none; grid-auto-rows: 1fr; height: 817px; }
.tool { position: relative; width: 44px; margin-left: 5px; }
.tool:not(.plain)::after {
  content: "";
  position: absolute;
  right: 4px;
  bottom: 5px;
  border-left: 4px solid transparent;
  border-bottom: 4px solid #cccccc;
}
.tool.active { height: 34px; align-self: center; background: #1d1d1d; }
.mini { display: flex; justify-content: space-between; padding: 7px 8px 7px 5px; }
.colors { display: grid; grid-template: 15px 13px 15px / 15px 13px 15px; padding-left: 4px; }
.chip { width: auto; background: #ffffff; border: 1px solid #222222; }
.fore { grid-area: 1 / 1 / 3 / 3; }
.back { grid-area: 2 / 2 / 4 / 4; }
.bottom { height: 37px; flex: none; }
.colors + .bottom { margin-top: 6px; }

/* document window */
.document {
  display: grid;
  grid-template: 42px 24px minmax(0, 1fr) 24px / 24px minmax(0, 1fr) 28px;
  min-height: 0;
}
.doc-tabs { grid-column: 1 / -1; display: flex; background: var(--dark); }
.doc-tab { display: flex; align-items: center; width: 296px; margin-bottom: 1px; padding-bottom: 3px; background: var(--panel); font-size: 17px; font-weight: 500; }
.close { width: 32px; margin-right: 3px; color: var(--muted); font-size: 18px; font-weight: 400; }
.corner {
  background: linear-gradient(#555555, #555555) 16px 0 / 1px 100% no-repeat, linear-gradient(#555555, #555555) 0 18px / 100% 1px no-repeat, #2b2b2b;
}
.ruler-x { overflow: hidden; padding-left: 14px; background: #2b2b2b; }
.ticks-x { display: flex; width: 1992px; height: 24px; }
.ticks-x span {
  flex: 1;
  padding: 4px 0 0 2px;
  border-left: 1px solid #666666;
  background: linear-gradient(90deg, #666666 1px, transparent 1px) 0 100% / 20% 4px repeat-x;
  color: #999999;
  font-size: 17px;
}
.corner, .ruler-x { grid-row: 2; }
.ruler-y { grid-row: 3; overflow: hidden; background: #2b2b2b; }
.ticks-y { display: flex; flex-direction: column; height: 1480px; margin-top: -47px; }
.ticks-y span {
  flex: 1;
  min-height: 0;
  padding: 1px 10px 0 2px;
  border-top: 1px solid #666666;
  background: linear-gradient(#666666 1px, transparent 1px) 100% 0 / 4px 20% repeat-y;
  color: #999999;
  font-size: 17px;
  line-height: 17px;
  word-break: break-all;
}
.ticks-y .long { padding-right: 13px; font-size: 13px; line-height: 13px; }
.stage { grid-row: 3; position: relative; overflow: hidden; background: #171717; }
.artboard { position: absolute; left: 526px; top: 464px; width: 1093px; height: 615px; background: #ffffff; }
.scroll-y { grid-area: 2 / 3 / 4 / 4; padding: 348px 9px 0 5px; background: #2a2a2a; }
.thumb-y { height: 631px; border-radius: 7px; background: #454545; }
.status { grid-column: 1 / -1; display: flex; background: #282828; border-bottom: 2px solid #222222; font-size: 16px; }
.zoom { width: 86px; padding-left: 15px; font-weight: 500; }
.doc-info { width: 260px; justify-content: flex-start; gap: 23px; padding-left: 16px; background: var(--panel); color: #b5b5b5; }
.next { width: 8px; height: 14px; }
.scroll-x { flex: 1; padding: 4px 520px 0 456px; background: #2a2a2a; }
.thumb-x { height: 14px; border-radius: 7px; background: #454545; }
.status-end { width: 28px; background: #303030; }

/* icon dock */
.dock { display: flex; flex-direction: column; }
.dock-group { display: flex; flex: none; flex-direction: column; align-items: center; border-bottom: 2px solid var(--line); background: var(--panel); }
.dock-group button { width: 52px; height: 47px; }
.double { padding-bottom: 6px; }
.double button { height: 38px; }
.double .grip + button { height: 44px; }
.dock-rest { flex: 1; background: var(--panel); }
.fx { font: italic 22px/24px "Liberation Sans", sans-serif; }
.fx-button { position: relative; }
.fx-button .fx { position: relative; margin-right: 6px; padding-top: 8px; text-shadow: 0 0 2px #333333, 1px 0 2px #333333; }
.fx-plate { position: absolute; right: 13px; top: 11px; width: 20px; height: 19px; background: #777777; }
.letter { gap: 2px; font-size: 25px; }
.caret::after { content: ""; width: 2px; height: 24px; background: #dddddd; }
.char-style { position: relative; }
.char-style b { position: absolute; left: 24px; top: 4px; font-size: 22px; font-weight: 600; line-height: 22px; }

/* panels */
.panels { display: flex; flex-direction: column; min-height: 0; }
.panel { display: flex; flex: none; flex-direction: column; background: var(--panel); }
.tabs { display: flex; height: 40px; background: var(--dark); color: var(--muted); }
.tab { padding: 0 14px 2px; font-size: 15px; }
.tab + .tab { padding-right: 15px; border-right: 1px solid #2b2b2b; }
.tab + .tab.tight { padding: 0 0 2px 14px; border: 0; font-size: 16px; }
.tab.on { background: var(--panel); color: #e6e6e6; font-weight: 500; }
.menu { margin-left: auto; width: 28px; padding-bottom: 1px; }
.menu svg { width: 16px; height: 12px; }
.color-panel { height: 311px; margin-bottom: 5px; }
.picker { display: flex; padding: 10px 22px 0 12px; }
.pair { display: grid; grid-template: 16px 15px 13px / 16px 15px 12px; height: 44px; margin: 4px 9px 0 0; }
.pair button { background: #ffffff; }
.pair-back { grid-area: 2 / 2 / 4 / 4; }
.pair .pair-fore { grid-area: 1 / 1 / 3 / 3; border: 2px solid #111111; outline: 1px solid #888888; outline-offset: -1px; }
.field2d {
  flex: 1;
  height: 236px;
  overflow: hidden;
  background: linear-gradient(to top, #000000, transparent), linear-gradient(to right, #ffffff, #ee3124);
}
.marker { width: 18px; height: 18px; margin: -9px; border: 2px solid #222222; border-radius: 50%; }
.hue-arrow { align-self: flex-end; width: 10px; height: 12px; margin: 0 3px -5px 11px; }
.hue {
  width: 28px;
  height: 236px;
  background: linear-gradient(#ee3124, #e936f5 17%, #0013f5 33%, #73fbfd 50%, #75fb4c 66%, #fffd54 84%, #ee3124);
}
.adjust-panel { height: 350px; margin-bottom: 5px; }
.hint { margin: 9px 0 12px 12px; color: var(--muted); font-size: 14px; line-height: 22px; }
.adjusts { display: flex; flex-direction: column; align-items: center; gap: 14px; width: 194px; margin-left: 74px; }
.adj-row { display: flex; gap: 10px; color: #d6d6d6; }
.layers-panel { flex: 1; min-height: 0; }
.layers-panel .tabs { flex: none; }
.filter-row { display: flex; flex: none; align-items: center; height: 48px; padding: 6px 4px 0 6px; border-bottom: 2px solid #2a2a2a; color: var(--muted); }
.dim { color: var(--faint); background: #292929; border-color: #3a3a3a; }
.kind { width: 179px; gap: 4px; color: #909090; }
.filters { display: flex; flex: 1; justify-content: space-between; padding: 0 19px 0 21px; }
.toggle input { display: block; width: 15px; height: 28px; border: 1px solid #2a2a2a; border-radius: 8px; background: radial-gradient(circle at 50% 6px, #a0a0a0 6px, transparent 7px); }
.blend-row, .lock-row { display: flex; flex: none; align-items: center; padding: 0 6px; }
.blend-row { height: 40px; padding-top: 1px; border-bottom: 2px solid #2a2a2a; }
.blend { width: 241px; }
.lbl.end { margin-left: auto; }
.combo.dim { width: 77px; }
.combo.dim input { color: #6a6a6a; padding-left: 5px; border-color: #3a3a3a; }
.lock-row { height: 44px; gap: 7px; color: var(--muted); }
.lock-label { margin-right: -7px; }
.lock-row .lbl.end { margin-right: -7px; }
.layer-list { display: flex; flex: 1; flex-direction: column; min-height: 0; background: var(--list); border-right: 20px solid #292929; }
.layer { display: flex; height: 60px; }
.eye { width: 43px; background: var(--panel); border-right: 1px solid #2a2a2a; }
.layer-body { display: flex; flex: 1; align-items: center; padding: 0 20px 0 6px; background: #4d4d4d; }
.thumb { width: 80px; height: 47px; border: 1px solid #333333; background: #ffffff; }
.layer-name { flex: 1; margin-left: 11px; font-weight: 500; }
.layer-actions { display: flex; flex: none; justify-content: flex-end; gap: 14px; height: 36px; padding-right: 35px; background: var(--panel); border-bottom: 2px solid #222222; }
.layer-actions button { position: relative; width: 25px; }
.drop::after { right: -1px; }
.off { color: #808080; }
.off.drop::after { border-top-color: #666666; }
```
